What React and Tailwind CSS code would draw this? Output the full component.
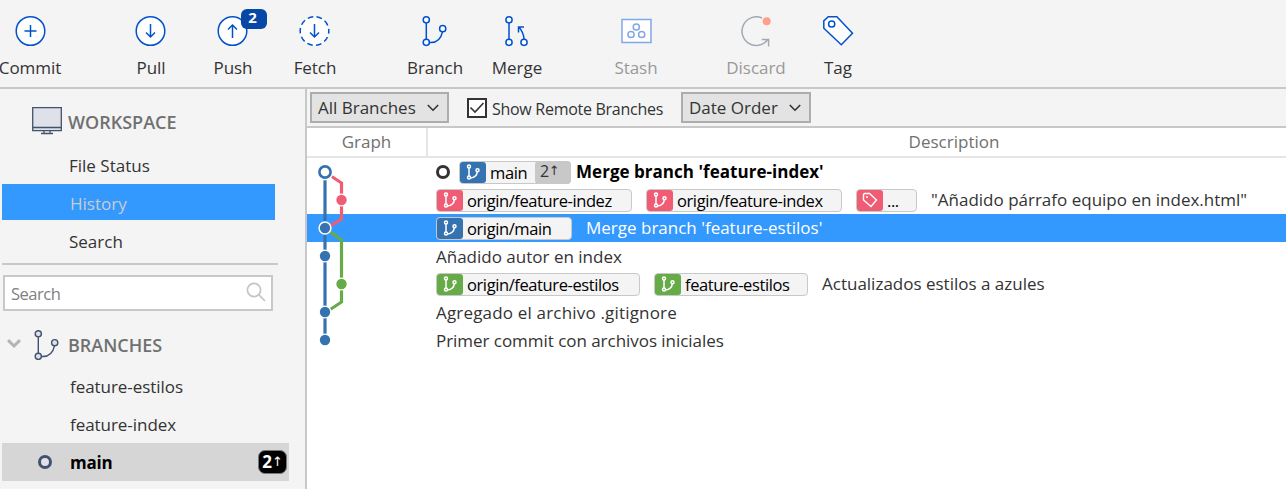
import React from "react";

const BLUE = "#0052cc";

function Node({ cx, cy, r = 3.1 }) {
  return <circle cx={cx} cy={cy} r={r} fill="#fff" />;
}

const icons = {
  commit: (
    <>
      <circle cx="15.500" cy="15" r="14.3" fill="#fff" />
      <path d="M15.500 9v12M9.500 15h12" />
    </>
  ),
  pull: (
    <>
      <circle cx="14.500" cy="15" r="14.3" fill="#fff" />
      <path d="M14.500 8v13M10 16.500L14.500 21l4.500-4.500" />
    </>
  ),
  push: (
    <>
      <circle cx="14.500" cy="15" r="14.3" fill="#fff" />
      <path d="M14.500 22V9M10 13.500L14.500 9l4.500 4.500" />
    </>
  ),
  fetch: (
    <>
      <circle cx="14.500" cy="15" r="14.3" fill="#fff" strokeDasharray="5.600 3.380" strokeDashoffset="2.800" />
      <path d="M14.500 8v13M10 16.500L14.500 21l4.500-4.500" />
    </>
  ),
  branch: (
    <>
      <path d="M6.300 7v16.500M9.500 26.500c7 .5 11.500-4 13-10.700" />
      <Node cx={6.3} cy={3.8} />
      <Node cx={6.3} cy={26.3} />
      <Node cx={22.7} cy={12.7} />
    </>
  ),
  merge: (
    <>
      <path d="M7 7v16.500M22 23c-.3-4.500-2-8.500-5-11.800M16.500 16.500V11H22" />
      <Node cx={7} cy={3.8} />
      <Node cx={7} cy={26.3} />
      <Node cx={22} cy={26.3} />
    </>
  ),
  stash: (
    <>
      <path d="M1 3.500h29v23H1z" fill="#fff" />
      <Node cx={15.3} cy={11} />
      <Node cx={10} cy={18.5} />
      <Node cx={20.7} cy={18.5} />
    </>
  ),
  discard: (
    <>
      <path d="M21 2A14.300 14.300 0 1 0 26.500 24L27.600 23.200M20.800 23.500h6.800v7" fill="none" />
      <circle cx="25.700" cy="5.300" r="4" fill="#ff9f8c" stroke="none" />
    </>
  ),
  tag: (
    <>
      <path d="M.8 4.900L5.300.8h8.600L29.500 17.200 18.300 28.800.8 12.300z" fill="#fff" />
      <Node cx={8.7} cy={8} />
    </>
  ),
};

function Tool({ name, label, className = "", color = BLUE, text = "text-[#333]", badge }) {
  return (
    <div className={`relative flex w-[82px] shrink-0 flex-col items-center pt-4 ${text} ${className}`}>
      <svg width="30" height="30" viewBox="0 0 30 30" className="overflow-visible" fill="none" stroke={color} strokeWidth="1.5">
        {icons[name]}
      </svg>
      <span className="mt-[10px] leading-6 tracking-[-0.05px]">{label}</span>
      {badge && (
        <span className="absolute left-[49px] top-[9px] flex h-5 w-[26px] items-center justify-center rounded-md bg-[#0747a6] pr-[3px] pb-[3px] text-[15px] font-bold text-white">
          {badge}
        </span>
      )}
    </div>
  );
}

function Select({ children, className }) {
  return (
    <div className={`flex h-[31px] items-center justify-between border-2 border-[#adadad] bg-[#e3e3e3] pl-[6px] pr-[8px] ${className}`}>
      <span className="pt-px">{children}</span>
      <svg width="12" height="8" viewBox="0 0 12 8" fill="none" stroke="#333" strokeWidth="1.6">
        <path d="M.8 1L6 6.200 11.200 1" />
      </svg>
    </div>
  );
}

function Ref({ color, label, tag, ahead, className = "" }) {
  return (
    <span className={`flex h-[23px] shrink-0 rounded-[4px] border border-[#c8c8c8] bg-[#f4f4f4] text-[16.5px] tracking-[-0.4px] text-black ${className}`}>
      <span className={`flex w-[26px] shrink-0 items-center justify-center rounded-[3px] ${color}`}>
        {tag ? (
          <svg width="16" height="16" viewBox="0 0 16 16" fill="none" stroke="#fff" strokeWidth="1.400">
            <path d="M1.500 2.500L2.500 1.500H7.500L14.500 8 9 14.500 1.500 8z" />
            <circle cx="5" cy="5" r="1" fill="#fff" stroke="none" />
          </svg>
        ) : (
          <svg width="14" height="16" viewBox="0 0 14 16" fill="none" stroke="#fff" strokeWidth="1.500">
            <path d="M3 3.800v8.400M4.500 14C8.500 13.500 11 11 11.200 8" />
            <circle cx="3" cy="2.400" r="1.500" />
            <circle cx="3" cy="13.600" r="1.500" />
            <circle cx="11.500" cy="6.300" r="1.500" />
          </svg>
        )}
      </span>
      <span className="flex-1 pl-[4px] leading-[21px]">{label}</span>
      {ahead && (
        <span className="-my-px -mr-px flex w-[36px] rounded-[4px] bg-[#c8c8c8] pl-[5px] text-[16px] leading-[21px] text-[#333]">
          2<span className="font-['DejaVu_Sans',sans-serif] text-[13px] leading-[20px]">↑</span>
        </span>
      )}
    </span>
  );
}

function Row({ children, className = "text-[#333]" }) {
  return <div className={`flex h-7 items-center pl-[129px] ${className}`}>{children}</div>;
}

function Graph() {
  return (
    <svg className="absolute left-0 top-0" width="60" height="200" fill="none" strokeWidth="3.200">
      <path d="M18 14V182" stroke="#3572b0" />
      <path d="M18 14L34.500 25V61L18 71" stroke="#f15c75" />
      <path d="M18 70L34.500 82V144L18 155" stroke="#67ab49" />
      <g stroke="none">
        <circle cx="18" cy="14" r="8.500" fill="#fff" />
        <circle cx="34.500" cy="42" r="6.500" fill="#fff" />
        <circle cx="18" cy="98" r="6.500" fill="#fff" />
        <circle cx="34.500" cy="126" r="6.500" fill="#fff" />
        <circle cx="18" cy="154" r="6.500" fill="#fff" />
        <circle cx="18" cy="182" r="6.500" fill="#fff" />
        <circle cx="34.500" cy="42" r="5.200" fill="#f15c75" />
        <circle cx="18" cy="98" r="5.200" fill="#3572b0" />
        <circle cx="34.500" cy="126" r="5.200" fill="#67ab49" />
        <circle cx="18" cy="154" r="5.200" fill="#3572b0" />
        <circle cx="18" cy="182" r="5.200" fill="#3572b0" />
      </g>
      <circle cx="18" cy="14" r="5.600" fill="#fff" stroke="#3572b0" strokeWidth="2.600" />
      <circle cx="18" cy="70" r="5.900" fill="#3572b0" stroke="#fff" strokeWidth="1.500" />
    </svg>
  );
}

function Sidebar() {
  return (
    <aside className="flex w-[307px] shrink-0 flex-col border-r-2 border-[#c8c8c8]">
      <div className="flex h-[58px] items-start pl-8 pt-[18px]">
        <svg width="30" height="28" viewBox="0 0 30 28" fill="none" stroke="#42526e" strokeWidth="1.300">
          <path d="M.7.7h28.600v23H.7z" fill="#dfe1e9" />
          <path d="M1 20.500h28M12 24v2.500M18 24v2.500M9 26.500h12" />
        </svg>
        <span className="ml-[6px] mt-[3px] text-[18px] font-semibold leading-6 tracking-[0px] text-[#707070]">WORKSPACE</span>
      </div>
      <div className="flex h-[37px] items-center pl-[69px]">File Status</div>
      <div className="ml-[2px] flex h-9 w-[273px] items-center bg-[#3399ff] pl-[68px] pt-[3px] text-[#ccc]">History</div>
      <div className="flex h-[43px] items-center pl-[69px]">Search</div>
      <div className="ml-[2px] h-[2px] w-[276px] bg-[#c8c8c8]" />
      <div className="ml-[3px] mt-[10px] flex h-9 w-[270px] items-center justify-between border-2 border-[#c8c8c8] bg-white pl-[6px] pr-[5px] text-[#808080]">
        <span className="pt-[2px] text-[16.5px] tracking-[-0.5px]">Search</span>
        <svg width="20" height="20" viewBox="0 0 20 20" className="-mt-[3px]" fill="none" stroke="#c4c4c4" strokeWidth="1.700">
          <circle cx="8" cy="8" r="6.600" />
          <path d="M12.700 12.700L19 19" />
        </svg>
      </div>
      <div className="flex h-[57px] items-start pl-[7px] pt-[17px]">
        <svg width="14" height="9" viewBox="0 0 14 9" className="mt-[11px]" fill="none" stroke="#b4b4b4" strokeWidth="3">
          <path d="M1 1.200L7 7l6-5.800" />
        </svg>
        <svg width="30" height="30" viewBox="0 0 30 30" className="ml-[11px] mt-[2px]" stroke="#42526e" strokeWidth="1.400" fill="none">
          <path d="M6.300 7v16.500M9.500 26.500c7 .5 11.500-4 13-10.700" />
          <g fill="#dfe1e9">
            <circle cx="6.300" cy="3.800" r="3.100" />
            <circle cx="6.300" cy="26.300" r="3.100" />
            <circle cx="22.700" cy="12.700" r="3.100" />
          </g>
        </svg>
        <span className="ml-[6px] mt-[5px] text-[18px] font-semibold leading-6 tracking-[0px] text-[#707070]">BRANCHES</span>
      </div>
      <div className="flex h-[38px] items-center pl-[70px] tracking-[-0.05px]">feature-estilos</div>
      <div className="flex h-[37px] items-center pl-[70px] tracking-[-0.05px]">feature-index</div>
      <div className="ml-[2px] flex h-[38px] w-[287px] items-center bg-[#d6d6d6] pl-9 pr-[2px] font-bold text-black">
        <span className="h-[14px] w-[14px] rounded-full border-[3px] border-[#42526e] bg-[#dfe1e9]" />
        <span className="ml-[18px] flex-1 pt-[2px] tracking-[-0.2px]">main</span>
        <span className="flex h-6 w-[29px] items-center justify-center rounded-[7px] border border-[#777] bg-black text-[17px] text-white">
          2<span className="font-['DejaVu_Sans',sans-serif] text-[13px] font-normal">↑</span>
        </span>
      </div>
    </aside>
  );
}

export default function App() {
  return (
    <div className="flex h-[489px] w-[1286px] flex-col overflow-hidden bg-[#f4f4f4] font-['Open_Sans','Noto_Sans',sans-serif] text-[17px] whitespace-nowrap text-[#333]">
      <header className="flex h-[89px] shrink-0 border-b-2 border-[#c8c8c8]">
        <Tool name="commit" label="Commit" className="-ml-[11px]" />
        <Tool name="pull" label="Pull" className="ml-[39px]" />
        <Tool name="push" label="Push" badge="2" />
        <Tool name="fetch" label="Fetch" />
        <Tool name="branch" label="Branch" className="ml-[38px]" />
        <Tool name="merge" label="Merge" />
        <Tool name="stash" label="Stash" className="ml-[37px]" color="#80a8e6" text="text-[#999]" />
        <Tool name="discard" label="Discard" className="ml-[38px]" color="#a0a8b6" text="text-[#999]" />
        <Tool name="tag" label="Tag" />
      </header>
      <div className="flex min-h-0 flex-1">
        <Sidebar />
        <main className="flex min-w-0 flex-1 flex-col bg-white">
          <div className="flex h-[39px] shrink-0 items-start border-b-2 border-[#c8c8c8] bg-[#f4f4f4] pl-[3px] pt-[3px]">
            <Select className="w-[139px]">All Branches</Select>
            <div className="ml-[18px] flex h-[31px] w-[214px] items-center">
              <span className="flex h-5 w-5 items-center justify-center border-2 border-[#333] bg-white">
                <svg width="16" height="14" viewBox="0 0 16 14" fill="none" stroke="#333" strokeWidth="1.600">
                  <path d="M1.500 6.500L6 11 14.500 2" />
                </svg>
              </span>
              <span className="ml-[5px] pt-[2px] text-[16px] tracking-[-0.28px]">Show Remote Branches</span>
            </div>
            <Select className="w-[130px]">Date Order</Select>
          </div>
          <div className="flex h-[30px] shrink-0 border-b-2 border-[#e5e5e5] leading-[28px] text-[#707070]">
            <div className="w-[121px] border-r-2 border-[#e5e5e5] text-center">Graph</div>
            <div className="flex-1 pl-[194px] text-center">Description</div>
          </div>
          <div className="relative">
            <Row className="text-black">
              <span className="h-[14px] w-[14px] rounded-full border-[3px] border-[#333] bg-white" />
              <Ref color="bg-[#3572b0]" label="main" ahead className="ml-[9px] w-[112px]" />
              <span className="ml-[5px] font-bold tracking-[0.03px]">Merge branch 'feature-index'</span>
            </Row>
            <Row>
              <Ref color="bg-[#f15c75]" label="origin/feature-indez" className="w-[196px]" />
              <Ref color="bg-[#f15c75]" label="origin/feature-index" className="ml-[14px] w-[196px]" />
              <Ref color="bg-[#f15c75]" label="..." tag className="ml-[14px] w-[61px]" />
              <span className="ml-[14px]">"Añadido párrafo equipo en index.html"</span>
            </Row>
            <Row className="bg-[#3399ff] text-white">
              <Ref color="bg-[#3572b0]" label="origin/main" className="w-[136px]" />
              <span className="ml-[14px]">Merge branch 'feature-estilos'</span>
            </Row>
            <Row><span className="pt-px">Añadido autor en index</span></Row>
            <Row>
              <Ref color="bg-[#67ab49]" label="origin/feature-estilos" className="w-[204px]" />
              <Ref color="bg-[#67ab49]" label="feature-estilos" className="ml-[14px] w-[154px]" />
              <span className="ml-[14px]">Actualizados estilos a azules</span>
            </Row>
            <Row><span className="pt-px tracking-[0.18px]">Agregado el archivo .gitignore</span></Row>
            <Row><span className="pt-px tracking-[-0.04px]">Primer commit con archivos iniciales</span></Row>
            <Graph />
          </div>
        </main>
      </div>
    </div>
  );
}
